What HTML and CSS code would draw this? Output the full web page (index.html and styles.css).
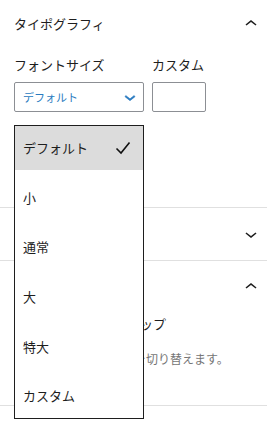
FILE: index.html
```html
<!DOCTYPE html>
<html lang="ja">
<head>
    <meta charset="UTF-8">
    <meta name="viewport" content="width=device-width, initial-scale=1.0">
    <title>タイポグラフィ</title>
    <link rel="stylesheet" href="styles.css">
</head>
<body>
    <div class="sidebar">
        <div class="panel">
            <div class="panel-header first">
                <span class="panel-title">タイポグラフィ</span>
                <svg class="chevron" viewBox="0 0 24 24" width="24" height="24"><path d="M6.5 12.4L12 8l5.5 4.4-.9 1.2L12 10l-4.5 3.6-1-1.2z"/></svg>
            </div>
            <div class="panel-body font-size">
                <div class="field">
                    <label>フォントサイズ</label>
                    <div class="select-box">
                        <span>デフォルト</span>
                        <svg viewBox="0 0 24 24" width="22" height="22"><path d="M17.5 11.6L12 16l-5.5-4.4.9-1.2L12 14l4.5-3.6 1 1.2z"/></svg>
                    </div>
                </div>
                <div class="field">
                    <label>カスタム</label>
                    <div class="custom-input"></div>
                </div>
            </div>
        </div>

        <div class="panel">
            <div class="panel-header">
                <span class="panel-title">色</span>
                <svg class="chevron" viewBox="0 0 24 24" width="24" height="24"><path d="M17.5 11.6L12 16l-5.5-4.4.9-1.2L12 14l4.5-3.6 1 1.2z"/></svg>
            </div>
        </div>

        <div class="panel">
            <div class="panel-header">
                <span class="panel-title">テキスト設定</span>
                <svg class="chevron" viewBox="0 0 24 24" width="24" height="24"><path d="M6.5 12.4L12 8l5.5 4.4-.9 1.2L12 10l-4.5 3.6-1-1.2z"/></svg>
            </div>
            <div class="panel-body drop-cap">
                <div class="toggle-row">
                    <span class="toggle"></span>
                    <span class="toggle-label">ドロップキャップ</span>
                </div>
                <p class="help">大きな頭文字を切り替えます。</p>
            </div>
        </div>

        <div class="panel">
            <div class="panel-header">
                <span class="panel-title">高度な設定</span>
                <svg class="chevron" viewBox="0 0 24 24" width="24" height="24"><path d="M17.5 11.6L12 16l-5.5-4.4.9-1.2L12 14l4.5-3.6 1 1.2z"/></svg>
            </div>
        </div>

        <!-- open select menu -->
        <ul class="dropdown">
            <li class="selected">
                <span>デフォルト</span>
                <svg viewBox="0 0 16 14" width="16" height="14"><polyline points="1.5,7.5 6,12 14.5,1.5" fill="none" stroke="#111" stroke-width="1.6"/></svg>
            </li>
            <li>小</li>
            <li>通常</li>
            <li>大</li>
            <li>特大</li>
            <li>カスタム</li>
        </ul>
    </div>
</body>
</html>
```

FILE: styles.css
```css
* {
    box-sizing: border-box;
}

body {
    margin: 0;
    background-color: #fff;
    font-family: "Noto Sans CJK JP", "Noto Sans", sans-serif;
    font-size: 13px;
    color: #1e1e1e;
}

.sidebar {
    position: relative;
    width: 267px;
    height: 426px;
    overflow: hidden;
}

.panel {
    border-bottom: 1px solid #e0e0e0;
}

.panel-header {
    display: flex;
    align-items: center;
    justify-content: space-between;
    height: 52px;
    padding: 0 4px 0 14px;
}

.panel-header.first {
    height: 48px;
}

.panel-title {
    line-height: 16px;
}

.chevron {
    fill: #1e1e1e;
}

.panel-body {
    padding: 0 14px;
}

.font-size {
    display: flex;
    gap: 8px;
    padding-top: 9px;
    padding-bottom: 95px;
}

.field {
    display: flex;
    flex-direction: column;
    gap: 9px;
}

.field label {
    line-height: 16px;
}

.select-box {
    display: flex;
    align-items: center;
    justify-content: space-between;
    width: 130px;
    height: 30px;
    padding: 0 2px 0 8px;
    border: 1px solid #8c8f94;
    border-radius: 2px;
    color: #2a7bc0;
    font-size: 11px;
}

.select-box svg {
    fill: #2a7bc0;
    stroke: #2a7bc0;
    stroke-width: 0.6;
}

.custom-input {
    width: 54px;
    height: 30px;
    border: 1px solid #8c8f94;
    border-radius: 2px;
}

.drop-cap {
    padding-top: 3px;
    padding-bottom: 38px;
    padding-left: 62px;
}

.toggle-row {
    position: relative;
    line-height: 16px;
}

.toggle {
    position: absolute;
    left: -48px;
    top: 0;
    width: 36px;
    height: 18px;
    border: 1px solid #1e1e1e;
    border-radius: 9px;
}

.help {
    margin: 19px 0 0;
    font-size: 12px;
    line-height: 16px;
    color: #757575;
}

.dropdown {
    position: absolute;
    left: 14px;
    top: 125px;
    width: 130px;
    margin: 0;
    padding: 0;
    list-style: none;
    display: flex;
    flex-direction: column;
    gap: 5.7px;
    background-color: #fff;
    border: 1px solid #1e1e1e;
}

.dropdown li {
    display: flex;
    align-items: center;
    justify-content: space-between;
    height: 44px;
    padding: 0 12px 0 8px;
    line-height: 16px;
}

.dropdown li.selected {
    background-color: #dcdcdc;
}
```
